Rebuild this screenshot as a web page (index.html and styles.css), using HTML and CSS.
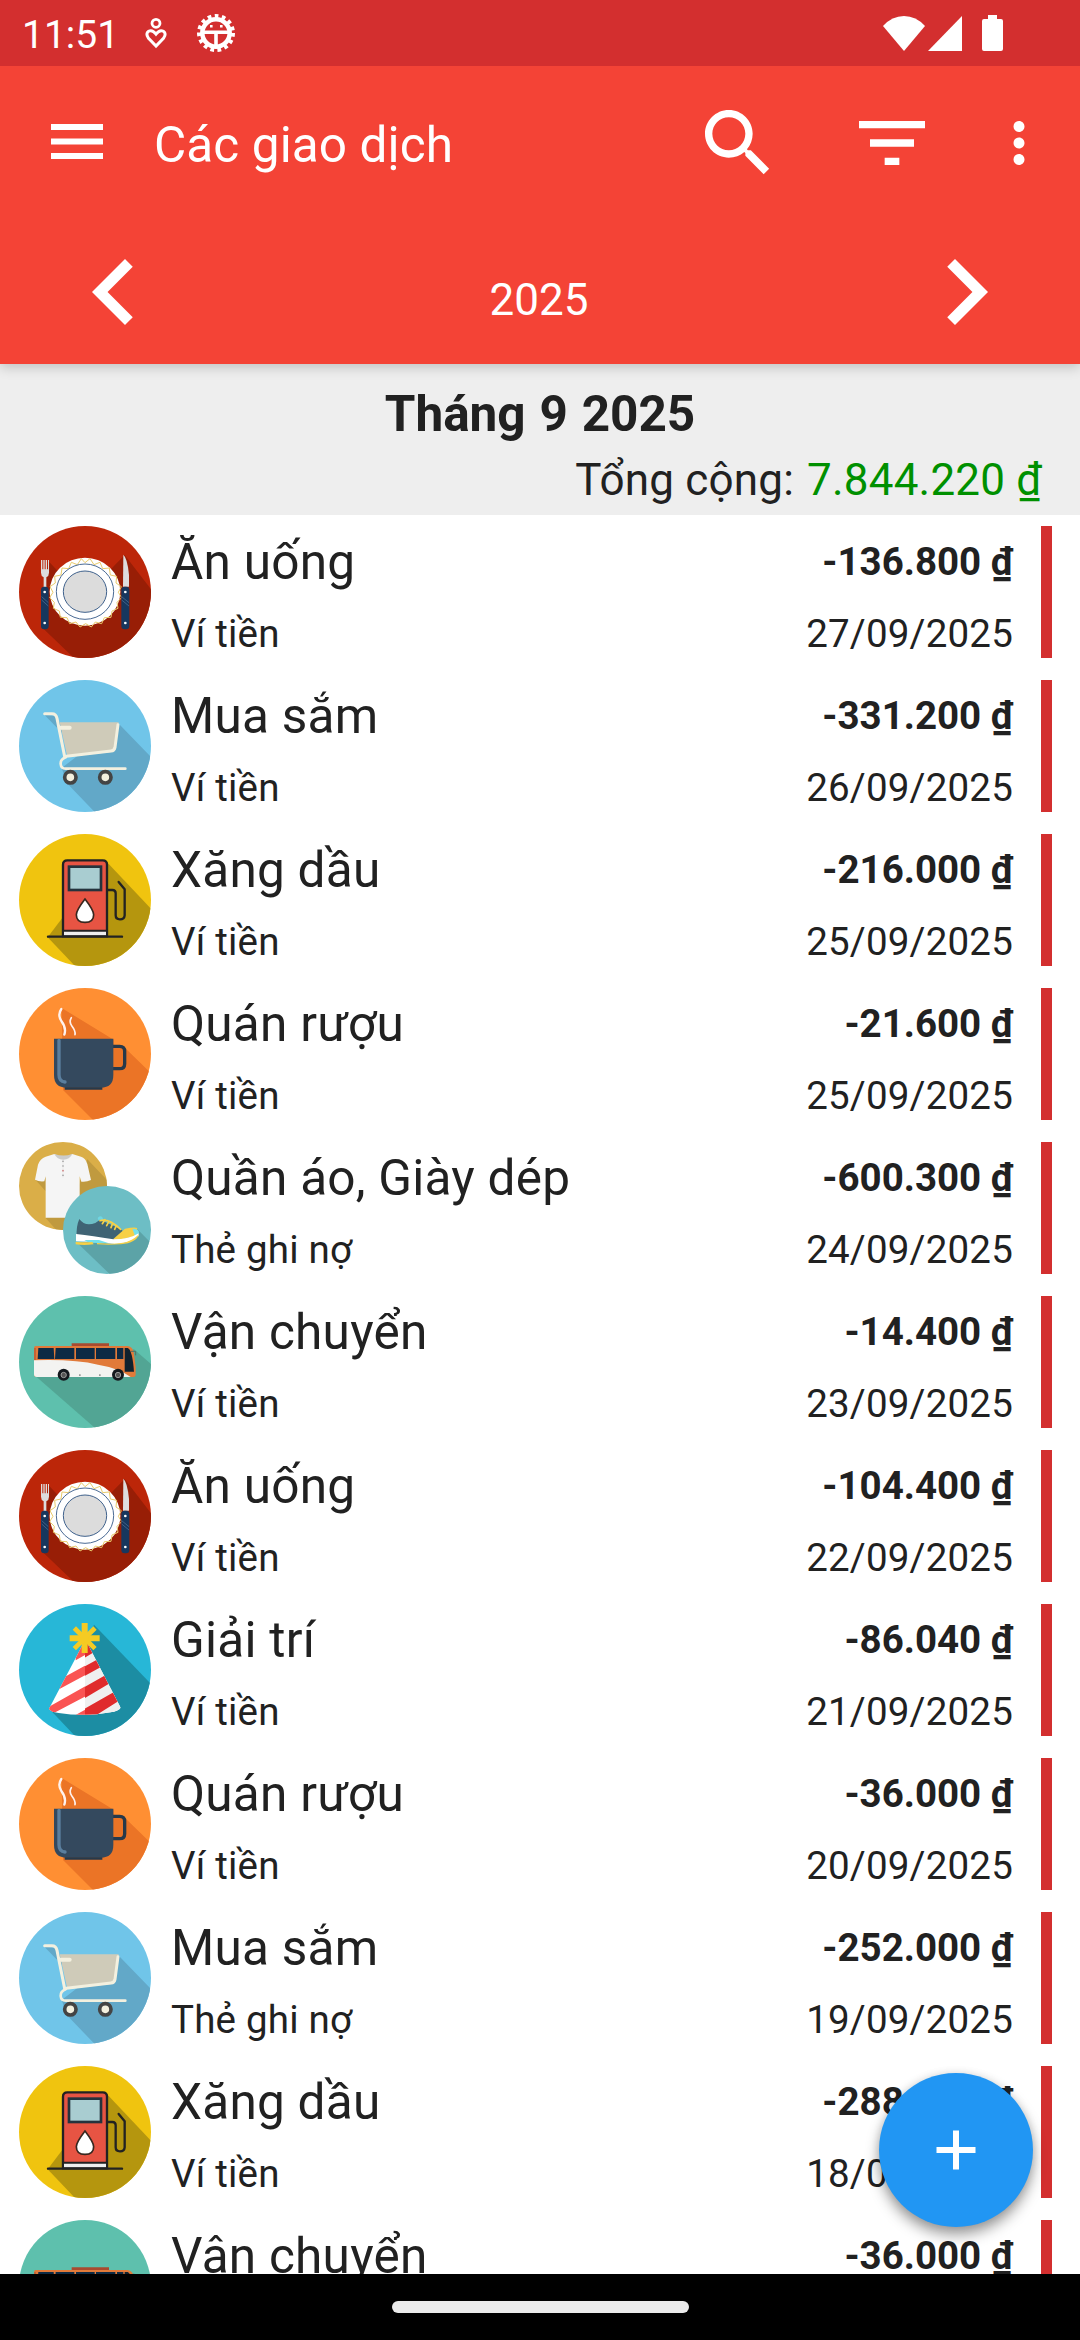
FILE: index.html
```html
<!DOCTYPE html>
<html lang="vi">
<head>
<meta charset="utf-8">
<title>Các giao dịch</title>
<link rel="stylesheet" href="styles.css">
</head>
<body>
<svg class="defs" aria-hidden="true">
  <defs>
    <clipPath id="disc"><circle cx="198" cy="198" r="198"/></clipPath>
    <clipPath id="disc-shirt"><circle cx="132" cy="132" r="132"/></clipPath>
    <clipPath id="disc-shoe"><circle cx="264" cy="264" r="132"/></clipPath>
    <clipPath id="cone"><path d="M192 120h14L305 311q-3 8-30 14-77 14-156 2-27-5-29-13Z"/></clipPath>
    <clipPath id="cone-right"><path d="M198 100h120v240H198Z"/></clipPath>

    <symbol id="food" viewBox="0 0 396 396">
      <g clip-path="url(#disc)">
        <path fill="#bc2609" d="M0 0h396v396H0Z"/>
        <path fill="#981e06" d="M88 105l45 48h120l64-66 83 108v201H165L67 302Z"/>
      </g>
      <ellipse cx="198" cy="197" rx="106" ry="102" fill="#fff"/>
      <path fill="none" stroke="#e9cb6c" stroke-width="3" stroke-linejoin="round" d="M198 110l15-12 12 18 18-7 8 19 20-2 3 21 19 4-2 20 16 11-9 17 10 16-14 14 3 18-18 8-3 19-20 1-8 18-19-5-12 15-17-10-17 10-12-15-19 5-8-18-20-1-3-19-18-8 3-18-14-14 10-16-9-17 16-11-2-20 19-4 3-21 20 2 8-19 18 7 12-18Z"/>
      <ellipse cx="198" cy="197" rx="86" ry="83" fill="#fff" stroke="#4a6a94" stroke-width="3"/>
      <ellipse cx="198" cy="197" rx="65" ry="62" fill="#dcdcdc" stroke="#3f618c" stroke-width="3"/>
      <path fill="#ddd" d="M66 102h4v28h3v-28h4v28h3v-28h4v28h3v-28h3v38q0 10-8 14v30H74v-30q-8-4-8-14Z"/>
      <rect x="66" y="182" width="23" height="128" rx="10" fill="#17375e"/>
      <path fill="#ddd" d="M313 86q12 10 17 60v36h-18Z"/>
      <rect x="307" y="182" width="24" height="128" rx="10" fill="#17375e"/>
      <path d="M68 212l20 18M68 222l20 18M308 212l22 18M308 222l22 18" stroke="#56759a" stroke-width="2"/>
      <circle cx="77" cy="198" r="4" fill="#fff"/><circle cx="77" cy="291" r="4" fill="#fff"/>
      <circle cx="319" cy="198" r="4" fill="#fff"/><circle cx="319" cy="291" r="4" fill="#fff"/>
    </symbol>

    <symbol id="cart" viewBox="0 0 396 396">
      <g clip-path="url(#disc)">
        <path fill="#70c5e9" d="M0 0h396v396H0Z"/>
        <path fill="#62a8c8" d="M76 104l54 56-6-30-14-22ZM300 132l96 99v165H227l-83-86-16-46Z"/>
      </g>
      <path fill="#cfcbb9" d="M122 127h177l-10 80q-2 8-10 9l-134 14Z"/>
      <path fill="none" stroke="#f3f0df" stroke-width="9" stroke-linecap="round" stroke-linejoin="round" d="M77 101h22q12 0 15 14l23 115M297 134l-9 68q-2 10-12 11l-134 16"/>
      <path fill="none" stroke="#f3f0df" stroke-width="8" stroke-linecap="round" d="M140 232q-16 6-15 20 1 14 15 14h179"/>
      <path fill="none" stroke="#f3f0df" stroke-width="12" stroke-linecap="round" d="M122 143h30"/>
      <circle cx="154" cy="292" r="17" fill="#f3f0df" stroke="#444" stroke-width="11"/>
      <circle cx="259" cy="292" r="17" fill="#f3f0df" stroke="#444" stroke-width="11"/>
    </symbol>

    <symbol id="fuel" viewBox="0 0 396 396">
      <g clip-path="url(#disc)">
        <path fill="#f0c40f" d="M0 0h396v396H0Z"/>
        <path fill="#b5960e" d="M260 80l136 144v172H168L86 310Z"/>
      </g>
      <path fill="#e75443" stroke="#222" stroke-width="7" d="M132 306V92q0-13 13-13h106q13 0 13 13v214Z"/>
      <path fill="#eee" stroke="#222" stroke-width="6" d="M132 290h132v17H132Z"/>
      <rect x="150" y="98" width="96" height="70" fill="#a9cdd1" stroke="#25333d" stroke-width="8"/>
      <path fill="#fff" stroke="#38271f" stroke-width="5" d="M198 195q-26 34-26 47 0 23 26 23t26-23q0-13-26-47Z"/>
      <path fill="none" stroke="#222" stroke-width="7" stroke-linecap="round" d="M87 308h222"/>
      <path fill="none" stroke="#222" stroke-width="7" stroke-linecap="round" stroke-linejoin="round" d="M266 168h14q10 0 10 10v66q0 12 13 12t14-12v-78l-18-22"/>
    </symbol>

    <symbol id="cup" viewBox="0 0 396 396">
      <g clip-path="url(#disc)">
        <path fill="#ff8f33" d="M0 0h396v396H0Z"/>
        <path fill="#eb7426" d="M128 60l156 95v15l28 4 84 82v140H222l-90-90Z"/>
      </g>
      <path fill="none" stroke="#27394a" stroke-width="10" d="M282 175h20q15 0 15 15v37q0 15-15 15h-20"/>
      <path fill="#34495e" d="M105 152h178v109q0 38-38 38H143q-38 0-38-38Z"/>
      <path fill="#27394a" d="M137 298h113v7H137Z"/>
      <path fill="none" stroke="#5b7f9e" stroke-width="10" stroke-linecap="round" d="M120 157v103q0 20 18 22"/>
      <path fill="none" stroke="#fff2ee" stroke-width="7" stroke-linecap="round" d="M127 63q-12 17 0 36 16 21 9 41"/>
      <path fill="none" stroke="#fff2ee" stroke-width="5" stroke-linecap="round" d="M157 89q-8 13 2 26 11 14 9 25"/>
    </symbol>

    <symbol id="clothes" viewBox="0 0 396 396">
      <g clip-path="url(#disc-shirt)">
        <path fill="#daae48" d="M0 0h264v264H0Z"/>
        <path fill="#c09a3f" d="M205 52l59 62v150H112l-32-36 100-100ZM48 112l32 36v-42Z"/>
      </g>
      <path fill="#f5f5f5" d="M80 44l26-8q28 18 54 0l26 8q14 4 19 22l11 48q-14 7-29 5l-5-16v124H80V103l-4 15q-16 2-28-5l9-45q6-18 23-24Z"/>
      <path fill="#ccc" d="M106 36q28 9 54 0-8 17-27 17T106 36Z"/>
      <path fill="none" stroke="#ddd" stroke-width="1" d="M132 55v52"/>
      <g fill="#999"><circle cx="132" cy="58" r="2.5"/><circle cx="132" cy="72" r="2.5"/><circle cx="132" cy="86" r="2.5" fill="#c77"/><circle cx="132" cy="100" r="2.5"/></g>
      <g clip-path="url(#disc-shoe)">
        <path fill="#6dbec5" d="M132 132h264v264H132Z"/>
        <path fill="#5ca3a7" d="M354 260l42 43v93H272l-96-92Z"/>
      </g>
      <path fill="#6fd6e3" d="M236 228q5-8 13-4l6 12-14 6ZM170 288l80 14 60 2-20-14Z"/>
      <path fill="#3f6374" d="M173 285q-2-32 8-54 17 24 48 12l14-10 62 28 10 10-30 24q-52-4-112-10Z"/>
      <path fill="#f7d046" d="M318 260q30-6 36-2 4 14-6 24l-54 14-12-4Z"/>
      <path fill="#75e0ea" d="M340 260q22 0 20 14l-12 8Z"/>
      <path fill="#fff" d="M171 276q50 6 112 16 48 0 76-18v8q-30 24-72 24-60-8-116-8Z"/>
      <path fill="#75e0ea" d="M196 294h44l30 10-60-2Z"/>
      <path fill="#f7d046" d="M170 300q30 2 50 0l4 7q-30 4-54 0ZM234 303q50 4 72 0 30-2 54-26-8 26-54 30-40 2-72 0Z"/>
      <path fill="none" stroke="#f7d046" stroke-width="5" stroke-linecap="round" d="M243 236q26-8 62 26M258 233l-8 12M270 238l-7 13M281 244l-5 13M292 251l-5 11"/>
    </symbol>

    <symbol id="bus" viewBox="0 0 396 396">
      <g clip-path="url(#disc)">
        <path fill="#5ec0ad" d="M0 0h396v396H0Z"/>
        <path fill="#52a594" d="M345 160l51 44v192H228L52 242Z"/>
      </g>
      <path fill="#a84b30" d="M158 142h112v9H158Z"/>
      <path fill="#e17a3a" d="M50 150h275q15 2 19 18l6 45v24q0 6-7 6H54q-9 0-9-8v-76q0-9 5-9Z"/>
      <path fill="#f3f3f1" d="M45 193q120-4 192 13 62 10 98 37H54q-9 0-9-8Z"/>
      <path fill="#0d2a44" d="M58 156h46l2 33H56ZM110 156h56v33h-58ZM171 156h56v33h-56ZM231 156h58v33h-58ZM294 156h19v33h-19Z"/>
      <path fill="#10212e" d="M317 156h9q14 5 19 71h-28Z"/>
      <path fill="none" stroke="#a84b30" stroke-width="3" d="M48 156v36"/>
      <path fill="none" stroke="#506f64" stroke-width="3" d="M336 166h14v12"/>
      <g fill="#14191e"><circle cx="134" cy="236" r="18"/><circle cx="297" cy="236" r="18"/></g>
      <g fill="#555" stroke="#999" stroke-width="3"><circle cx="134" cy="237" r="8"/><circle cx="297" cy="237" r="8"/></g>
      <path fill="#999" d="M180 235h5v5h-5ZM240 235h5v5h-5Z"/>
    </symbol>

    <symbol id="party" viewBox="0 0 396 396">
      <g clip-path="url(#disc)">
        <path fill="#27b7d7" d="M0 0h396v396H0Z"/>
        <path fill="#1c8da3" d="M225 62l171 178v156H168L92 316Z"/>
      </g>
      <g clip-path="url(#cone)">
        <path fill="#fff" d="M80 100h240v240H80Z"/>
        <path fill="#fa5453" d="M170 110h60v25l-60 34ZM120 228L240 162v29L120 256ZM80 314L260 212v33L80 340ZM150 344L310 255v33L190 344Z"/>
        <g clip-path="url(#cone-right)">
          <path fill="#eff0f0" d="M198 100h120v240H198Z"/>
          <path fill="#e02b2c" d="M190 110h50v26l-50 29ZM190 191l60-33v29l-60 33ZM190 253l90-51v31l-90 54ZM190 318l120-68v34l-95 60h-25Z"/>
        </g>
      </g>
      <g fill="none" stroke="#f5cb23"><path stroke-width="18" d="M197 57v90M152 103h90"/><path stroke-width="14" d="M166 72l62 62M228 72l-62 62"/></g>
    </symbol>
  </defs>
</svg>

<div class="screen">
  <div class="statusbar">
    <span class="clock">11:51</span>
    <svg class="st-heart" viewBox="0 0 22 32" fill="none" stroke="#fff" stroke-width="2.8"><circle cx="11" cy="6.3" r="4"/><path stroke-width="3" d="M11 29L3.3 21Q.3 16.500 3.600 14.300 7.200 12.300 11 17 14.800 12.300 18.400 14.300 21.700 16.500 18.700 21Z"/></svg>
    <svg class="st-gear" viewBox="0 0 40 40"><circle cx="20" cy="20" r="13.700" fill="none" stroke="#fff" stroke-width="4.500"/><circle cx="20" cy="20" r="17" fill="none" stroke="#fff" stroke-width="4" stroke-dasharray="3.700 3.421"/><path fill="#fff" d="M8 17.500h24v3.400H8ZM18.200 20h3.600v13h-3.600ZM14 12h2.600v2.600H14ZM24 12h2.600v2.600H24Z"/></svg>
    <span class="spacer"></span>
    <svg class="st-wifi" viewBox="0 0 42 35"><path fill="#fff" d="M0 10Q9 0 21 0t21 10L21 35Z"/></svg>
    <svg class="st-signal" viewBox="0 0 34 35"><path fill="#fff" d="M34 0v35H0Z"/></svg>
    <svg class="st-battery" viewBox="0 0 21 36"><path fill="#fff" d="M6 0h9v4h4q2 0 2 2v28q0 2-2 2H2q-2 0-2-2V6q0-2 2-2h4Z"/></svg>
  </div>

  <header class="appbar">
    <div class="toolbar">
      <svg class="menu" viewBox="0 0 52 36"><path fill="#fff" d="M0 0h52v6H0ZM0 14.500h52v6H0ZM0 29h52v6H0Z"/></svg>
      <h1 class="title">Các giao dịch</h1>
      <svg class="action" viewBox="0 0 24 24"><path fill="#fff" d="M15.500 14h-.79l-.28-.27C15.410 12.590 16 11.110 16 9.500 16 5.910 13.090 3 9.500 3S3 5.910 3 9.500 5.910 16 9.500 16c1.610 0 3.090-.59 4.230-1.570l.27.28v.79l5 4.990L20.490 19l-4.990-5zm-6 0C7.010 14 5 11.990 5 9.500S7.010 5 9.500 5 14 7.010 14 9.500 11.990 14 9.500 14z"/></svg>
      <svg class="action filter" viewBox="0 0 24 24"><path fill="#fff" d="M10 18h4v-2h-4v2zM3 6v2h18V6H3zm3 7h12v-2H6v2z"/></svg>
      <svg class="more" viewBox="0 0 24 24"><path fill="#fff" d="M12 8c1.100 0 2-.9 2-2s-.9-2-2-2-2 .9-2 2 .9 2 2 2zm0 2c-1.100 0-2 .9-2 2s.9 2 2 2 2-.9 2-2-.9-2-2-2zm0 6c-1.100 0-2 .9-2 2s.9 2 2 2 2-.9 2-2-.9-2-2-2z"/></svg>
    </div>
    <div class="period">
      <svg class="chevron" viewBox="0 0 24 24"><path fill="#fff" d="M15.410 7.410L14 6l-6 6 6 6 1.410-1.410L10.830 12z"/></svg>
      <span class="year">2025</span>
      <svg class="chevron" viewBox="0 0 24 24"><path fill="#fff" d="M10 6L8.590 7.410 13.170 12l-4.580 4.590L10 18l6-6z"/></svg>
    </div>
  </header>

  <section class="summary">
    <h2 class="month">Tháng 9 2025</h2>
    <p class="total"><span>Tổng cộng:</span><span class="positive">7.844.220 ₫</span></p>
  </section>

  <main class="list">
    <article class="row"><svg class="icon"><use href="#food"/></svg><div class="info"><p class="name">Ăn uống</p><p class="wallet">Ví tiền</p></div><div class="figures"><p class="amount">-136.800 ₫</p><p class="date">27/09/2025</p></div><i class="mark"></i></article>
    <article class="row"><svg class="icon"><use href="#cart"/></svg><div class="info"><p class="name">Mua sắm</p><p class="wallet">Ví tiền</p></div><div class="figures"><p class="amount">-331.200 ₫</p><p class="date">26/09/2025</p></div><i class="mark"></i></article>
    <article class="row"><svg class="icon"><use href="#fuel"/></svg><div class="info"><p class="name">Xăng dầu</p><p class="wallet">Ví tiền</p></div><div class="figures"><p class="amount">-216.000 ₫</p><p class="date">25/09/2025</p></div><i class="mark"></i></article>
    <article class="row"><svg class="icon"><use href="#cup"/></svg><div class="info"><p class="name">Quán rượu</p><p class="wallet">Ví tiền</p></div><div class="figures"><p class="amount">-21.600 ₫</p><p class="date">25/09/2025</p></div><i class="mark"></i></article>
    <article class="row"><svg class="icon"><use href="#clothes"/></svg><div class="info"><p class="name">Quần áo, Giày dép</p><p class="wallet">Thẻ ghi nợ</p></div><div class="figures"><p class="amount">-600.300 ₫</p><p class="date">24/09/2025</p></div><i class="mark"></i></article>
    <article class="row"><svg class="icon"><use href="#bus"/></svg><div class="info"><p class="name">Vận chuyển</p><p class="wallet">Ví tiền</p></div><div class="figures"><p class="amount">-14.400 ₫</p><p class="date">23/09/2025</p></div><i class="mark"></i></article>
    <article class="row"><svg class="icon"><use href="#food"/></svg><div class="info"><p class="name">Ăn uống</p><p class="wallet">Ví tiền</p></div><div class="figures"><p class="amount">-104.400 ₫</p><p class="date">22/09/2025</p></div><i class="mark"></i></article>
    <article class="row"><svg class="icon"><use href="#party"/></svg><div class="info"><p class="name">Giải trí</p><p class="wallet">Ví tiền</p></div><div class="figures"><p class="amount">-86.040 ₫</p><p class="date">21/09/2025</p></div><i class="mark"></i></article>
    <article class="row"><svg class="icon"><use href="#cup"/></svg><div class="info"><p class="name">Quán rượu</p><p class="wallet">Ví tiền</p></div><div class="figures"><p class="amount">-36.000 ₫</p><p class="date">20/09/2025</p></div><i class="mark"></i></article>
    <article class="row"><svg class="icon"><use href="#cart"/></svg><div class="info"><p class="name">Mua sắm</p><p class="wallet">Thẻ ghi nợ</p></div><div class="figures"><p class="amount">-252.000 ₫</p><p class="date">19/09/2025</p></div><i class="mark"></i></article>
    <article class="row"><svg class="icon"><use href="#fuel"/></svg><div class="info"><p class="name">Xăng dầu</p><p class="wallet">Ví tiền</p></div><div class="figures"><p class="amount">-288.000 ₫</p><p class="date">18/09/2025</p></div><i class="mark"></i></article>
    <article class="row"><svg class="icon"><use href="#bus"/></svg><div class="info"><p class="name">Vận chuyển</p></div><div class="figures"><p class="amount">-36.000 ₫</p></div><i class="mark"></i></article>
  </main>

  <button class="fab" aria-label="Thêm"><svg viewBox="0 0 40 40"><path fill="#fff" d="M17 .500h6v16.500h16.500v6H23v16.500h-6V23H.500v-6H17Z"/></svg></button>
  <footer class="navbar"><span class="pill"></span></footer>
</div>
</body>
</html>
```
FILE: styles.css
```css
* { box-sizing: border-box; }

body {
  margin: 0;
  background: #fff;
  color: #212121;
  font-family: Roboto, "Noto Sans", sans-serif;
}

h1, h2, p { margin: 0; font-weight: 400; white-space: nowrap; }
svg { display: block; flex: none; }

.defs { position: absolute; width: 0; height: 0; }

.screen {
  position: relative;
  display: flex;
  flex-direction: column;
  width: 1080px;
  height: 2340px;
  overflow: hidden;
}

.statusbar {
  position: relative;
  z-index: 1;
  display: flex;
  align-items: center;
  flex: none;
  height: 66px;
  padding: 0 77px 0 22px;
  background: #d32f2f;
  color: #fff;
}
.clock { width: 123px; font-size: 39px; line-height: 46px; padding-top: 3px; }
.spacer { flex: 1; }
.st-heart { width: 22px; height: 32px; }
.st-gear { width: 40px; height: 40px; margin-left: 29px; }
.st-wifi { width: 42px; height: 35px; margin-right: 3px; }
.st-signal { width: 34px; height: 35px; margin-right: 20px; }
.st-battery { width: 21px; height: 36px; }

.appbar {
  position: relative;
  flex: none;
  height: 298px;
  background: #f44336;
  color: #fff;
  box-shadow: 0 3px 12px rgba(0, 0, 0, .2);
}
.toolbar {
  display: flex;
  align-items: center;
  height: 154px;
  padding: 0 28px 0 51px;
}
.menu { width: 52px; height: 36px; margin-top: -2px; }
.title { flex: 1; margin-left: 51px; font-size: 49.5px; line-height: 58px; letter-spacing: .1px; padding-top: 3px; }
.action { width: 88px; height: 88px; }
.filter { margin-left: 66px; }
.more { width: 66px; height: 66px; margin-left: 50px; }

.period {
  display: flex;
  align-items: center;
  justify-content: space-between;
  height: 144px;
  padding: 0 48px;
}
.chevron { width: 132px; height: 132px; }
.year { font-size: 44px; line-height: 52px; padding: 15px 2px 0 0; }

.summary {
  flex: none;
  height: 151px;
  padding: 21px 38px 0 0;
  background: #eee;
}
.month {
  margin-right: -38px;
  font-size: 49.5px;
  line-height: 58px;
  font-weight: 700;
  word-spacing: 1.5px;
  text-align: center;
}
.total {
  display: flex;
  justify-content: flex-end;
  gap: 13px;
  margin-top: 11px;
  font-size: 44px;
  line-height: 52px;
  letter-spacing: .2px;
}
.positive { color: #009000; }

.list { flex: 1; min-height: 0; overflow: hidden; }
.row {
  display: flex;
  height: 154px;
  padding: 11px 28px 11px 19px;
}
.icon { width: 132px; height: 132px; }
.info { flex: 1; padding: 7px 0 0 20px; }
.name { font-size: 49.5px; line-height: 58px; letter-spacing: .25px; }
.wallet { margin-top: 20px; font-size: 38.5px; line-height: 46px; letter-spacing: .2px; }
.figures { padding-top: 13px; text-align: right; font-size: 38.5px; line-height: 46px; }
.amount { font-weight: 700; }
.date { margin-top: 26px; letter-spacing: .2px; }
.mark { width: 11px; height: 132px; margin-left: 28px; background: #d32f2f; }

.fab {
  position: absolute;
  left: 879px;
  top: 2073px;
  display: flex;
  align-items: center;
  justify-content: center;
  width: 154px;
  height: 154px;
  padding: 0;
  border: 0;
  border-radius: 50%;
  background: #2196f3;
  box-shadow: 0 8px 14px rgba(0, 0, 0, .38), 0 0 8px rgba(0, 0, 0, .1);
}
.fab svg { width: 40px; height: 40px; }

.navbar {
  position: relative;
  display: flex;
  align-items: center;
  justify-content: center;
  flex: none;
  height: 66px;
  background: #000;
}
.pill { width: 297px; height: 12px; border-radius: 6px; background: #ebebeb; }
```
